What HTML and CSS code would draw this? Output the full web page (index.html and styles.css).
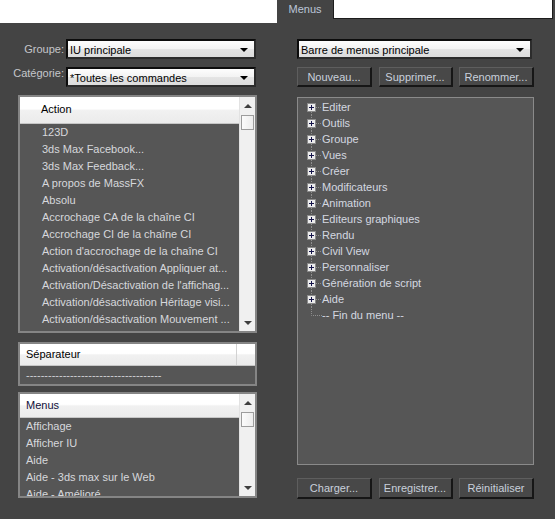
FILE: index.html
```html
<!DOCTYPE html>
<html lang="fr">
<head>
<meta charset="utf-8">
<title>Menus</title>
<link rel="stylesheet" href="styles.css">
</head>
<body>
<div class="topbar">
  <div class="top-left"></div>
  <div class="tab">Menus</div>
  <div class="top-right"></div>
</div>
<div class="main">
  <div class="col-left">
    <div class="field">
      <div class="lbl">Groupe:</div>
      <div class="select"><span>IU principale</span><span class="arrow"></span></div>
    </div>
    <div class="field">
      <div class="lbl lbl-up">Catégorie:</div>
      <div class="select"><span>*Toutes les commandes</span><span class="arrow"></span></div>
    </div>

    <div class="listbox action">
      <div class="lcontent">
        <div class="lhead ahead">Action</div>
        <div class="litem">123D</div>
        <div class="litem">3ds Max Facebook...</div>
        <div class="litem">3ds Max Feedback...</div>
        <div class="litem">A propos de MassFX</div>
        <div class="litem">Absolu</div>
        <div class="litem">Accrochage CA de la chaîne CI</div>
        <div class="litem">Accrochage CI de la chaîne CI</div>
        <div class="litem">Action d'accrochage de la chaîne CI</div>
        <div class="litem">Activation/désactivation Appliquer at...</div>
        <div class="litem">Activation/Désactivation de l'affichag...</div>
        <div class="litem">Activation/désactivation Héritage visi...</div>
        <div class="litem">Activation/désactivation Mouvement ...</div>
        <div class="litem">Activation/désactivation Positionnem...</div>
      </div>
      <div class="scroll">
        <div class="sb-btn"><span class="up"></span></div>
        <div class="thumb"></div>
        <div class="sb-fill"></div>
        <div class="sb-btn"><span class="down"></span></div>
      </div>
    </div>

    <div class="listbox sep">
      <div class="lcontent">
        <div class="lhead sephead"><div class="sepcell">Séparateur</div><div class="sepcell2"></div></div>
        <div class="sepline">-------------------------------------</div>
      </div>
    </div>

    <div class="listbox menus">
      <div class="lcontent">
        <div class="lhead mhead">Menus</div>
        <div class="litem mitem">Affichage</div>
        <div class="litem mitem">Afficher IU</div>
        <div class="litem mitem">Aide</div>
        <div class="litem mitem">Aide - 3ds max sur le Web</div>
        <div class="litem mitem">Aide - Amélioré</div>
      </div>
      <div class="scroll">
        <div class="sb-btn"><span class="up"></span></div>
        <div class="thumb"></div>
        <div class="sb-fill"></div>
        <div class="sb-btn"><span class="down"></span></div>
      </div>
    </div>
  </div>

  <div class="col-right">
    <div class="select wide"><span>Barre de menus principale</span><span class="arrow"></span></div>
    <div class="btnrow">
      <button class="btn">Nouveau...</button>
      <button class="btn mid">Supprimer...</button>
      <button class="btn">Renommer...</button>
    </div>
    <div class="tree">
      <div class="node"><svg viewBox="0 0 19 16"><path class="dot" d="M8.5 13V16M13 8.5H19"/><rect class="pbox" x="4.5" y="4.5" width="8" height="8"/><path class="plus" d="M6 8.5H11M8.5 6V11"/></svg><span>Editer</span></div>
      <div class="node"><svg viewBox="0 0 19 16"><path class="dot" d="M8.5 0V4M8.5 13V16M13 8.5H19"/><rect class="pbox" x="4.5" y="4.5" width="8" height="8"/><path class="plus" d="M6 8.5H11M8.5 6V11"/></svg><span>Outils</span></div>
      <div class="node"><svg viewBox="0 0 19 16"><path class="dot" d="M8.5 0V4M8.5 13V16M13 8.5H19"/><rect class="pbox" x="4.5" y="4.5" width="8" height="8"/><path class="plus" d="M6 8.5H11M8.5 6V11"/></svg><span>Groupe</span></div>
      <div class="node"><svg viewBox="0 0 19 16"><path class="dot" d="M8.5 0V4M8.5 13V16M13 8.5H19"/><rect class="pbox" x="4.5" y="4.5" width="8" height="8"/><path class="plus" d="M6 8.5H11M8.5 6V11"/></svg><span>Vues</span></div>
      <div class="node"><svg viewBox="0 0 19 16"><path class="dot" d="M8.5 0V4M8.5 13V16M13 8.5H19"/><rect class="pbox" x="4.5" y="4.5" width="8" height="8"/><path class="plus" d="M6 8.5H11M8.5 6V11"/></svg><span>Créer</span></div>
      <div class="node"><svg viewBox="0 0 19 16"><path class="dot" d="M8.5 0V4M8.5 13V16M13 8.5H19"/><rect class="pbox" x="4.5" y="4.5" width="8" height="8"/><path class="plus" d="M6 8.5H11M8.5 6V11"/></svg><span>Modificateurs</span></div>
      <div class="node"><svg viewBox="0 0 19 16"><path class="dot" d="M8.5 0V4M8.5 13V16M13 8.5H19"/><rect class="pbox" x="4.5" y="4.5" width="8" height="8"/><path class="plus" d="M6 8.5H11M8.5 6V11"/></svg><span>Animation</span></div>
      <div class="node"><svg viewBox="0 0 19 16"><path class="dot" d="M8.5 0V4M8.5 13V16M13 8.5H19"/><rect class="pbox" x="4.5" y="4.5" width="8" height="8"/><path class="plus" d="M6 8.5H11M8.5 6V11"/></svg><span>Editeurs graphiques</span></div>
      <div class="node"><svg viewBox="0 0 19 16"><path class="dot" d="M8.5 0V4M8.5 13V16M13 8.5H19"/><rect class="pbox" x="4.5" y="4.5" width="8" height="8"/><path class="plus" d="M6 8.5H11M8.5 6V11"/></svg><span>Rendu</span></div>
      <div class="node"><svg viewBox="0 0 19 16"><path class="dot" d="M8.5 0V4M8.5 13V16M13 8.5H19"/><rect class="pbox" x="4.5" y="4.5" width="8" height="8"/><path class="plus" d="M6 8.5H11M8.5 6V11"/></svg><span>Civil View</span></div>
      <div class="node"><svg viewBox="0 0 19 16"><path class="dot" d="M8.5 0V4M8.5 13V16M13 8.5H19"/><rect class="pbox" x="4.5" y="4.5" width="8" height="8"/><path class="plus" d="M6 8.5H11M8.5 6V11"/></svg><span>Personnaliser</span></div>
      <div class="node"><svg viewBox="0 0 19 16"><path class="dot" d="M8.5 0V4M8.5 13V16M13 8.5H19"/><rect class="pbox" x="4.5" y="4.5" width="8" height="8"/><path class="plus" d="M6 8.5H11M8.5 6V11"/></svg><span>Génération de script</span></div>
      <div class="node"><svg viewBox="0 0 19 16"><path class="dot" d="M8.5 0V4M8.5 13V16M13 8.5H19"/><rect class="pbox" x="4.5" y="4.5" width="8" height="8"/><path class="plus" d="M6 8.5H11M8.5 6V11"/></svg><span>Aide</span></div>
      <div class="node"><svg viewBox="0 0 19 16"><path class="dot" d="M8.5 0V8.5H19"/></svg><span>-- Fin du menu --</span></div>
    </div>
    <div class="btnrow bottom">
      <button class="btn">Charger...</button>
      <button class="btn mid">Enregistrer...</button>
      <button class="btn">Réinitialiser</button>
    </div>
  </div>
</div>
</body>
</html>
```

FILE: styles.css
```css
html, body {
  margin: 0;
  padding: 0;
}
body {
  background: #444444;
  font-family: "Liberation Sans", Arial, sans-serif;
  font-size: 11px;
  color: #d4d8de;
  width: 555px;
  height: 519px;
  overflow: hidden;
}

/* top tab strip */
.topbar {
  display: flex;
  height: 23px;
}
.top-left {
  width: 277px;
  background: #ffffff;
}
.tab {
  width: 56px;
  box-sizing: border-box;
  padding-top: 2px;
  line-height: 14px;
  text-align: center;
  color: #bcc6d8;
}
.top-right {
  width: 220px;
  height: 19px;
  box-sizing: border-box;
  background: #ffffff;
  border: 1px solid #1c1c1c;
  border-top: 0;
}

/* columns */
.main {
  display: flex;
}
.col-left {
  width: 257px;
  padding-top: 16px;
  display: flex;
  flex-direction: column;
}
.col-right {
  width: 237px;
  margin-left: 40px;
  padding-top: 16px;
  display: flex;
  flex-direction: column;
}

/* fields */
.field {
  display: flex;
  height: 20px;
}
.field + .field {
  margin-top: 8px;
}
.lbl {
  width: 64px;
  text-align: right;
  white-space: nowrap;
  line-height: 20px;
  color: #c4c6ca;
}
.lbl-up {
  line-height: 12px;
}
.select {
  width: 190px;
  margin-left: 2px;
  height: 20px;
  box-sizing: border-box;
  border-style: solid;
  border-width: 2px;
  border-color: #0c0c0c #2c2c2c #2c2c2c #0c0c0c;
  background: linear-gradient(#fdfdfd, #f3f3f3 48%, #e4e4e4 52%, #dcdcdc);
  color: #000000;
  padding: 1px 6px 0 2px;
  display: flex;
  align-items: center;
  justify-content: space-between;
  white-space: nowrap;
}
.select.wide {
  width: 235px;
  margin-left: 0;
}
.arrow {
  width: 0;
  height: 0;
  border-left: 4px solid transparent;
  border-right: 4px solid transparent;
  border-top: 4px solid #000000;
}

/* list boxes */
.listbox {
  margin-left: 18px;
  width: 239px;
  box-sizing: border-box;
  border: 2px solid #858585;
  background: #565656;
  display: flex;
  overflow: hidden;
}
.action {
  margin-top: 8px;
  height: 238px;
}
.sep {
  margin-top: 9px;
  height: 44px;
}
.menus {
  margin-top: 6px;
  height: 106px;
}
.lcontent {
  flex: 1;
  min-width: 0;
  overflow: hidden;
  display: flex;
  flex-direction: column;
}
.lhead {
  flex: none;
  height: 25px;
  line-height: 25px;
  border-bottom: 1px solid #c6c6c6;
  background: linear-gradient(#ffffff, #ffffff 45%, #f1f1f1 52%, #ebebeb);
  color: #000000;
  padding-left: 21px;
}
.ahead {
  height: 26px;
  line-height: 25px;
}
.litem {
  flex: none;
  height: 17px;
  line-height: 17px;
  padding-left: 22px;
  white-space: nowrap;
  color: #d6d8dc;
}
.mhead {
  height: 23px;
  line-height: 23px;
  padding-left: 6px;
  color: #10103a;
}
.mitem {
  padding-left: 6px;
}
.sephead {
  height: 21px;
  line-height: 21px;
  padding-left: 0;
  display: flex;
}
.sepcell {
  width: 210px;
  padding-left: 6px;
  border-right: 1px solid #d2d2d2;
}
.sepcell2 {
  flex: 1;
}
.sepline {
  line-height: 18px;
  padding-left: 6px;
  white-space: nowrap;
  color: #d0d2d6;
}

/* scrollbar */
.scroll {
  flex: none;
  width: 16px;
  box-sizing: border-box;
  border-left: 1px solid #e2e2e2;
  background: #f0f0f0;
  display: flex;
  flex-direction: column;
  align-items: center;
}
.sb-btn {
  flex: none;
  width: 15px;
  height: 17px;
  display: flex;
  align-items: center;
  justify-content: center;
}
.up {
  width: 0;
  height: 0;
  border-left: 4px solid transparent;
  border-right: 4px solid transparent;
  border-bottom: 4px solid #3e3e3e;
}
.down {
  width: 0;
  height: 0;
  border-left: 4px solid transparent;
  border-right: 4px solid transparent;
  border-top: 4px solid #3e3e3e;
}
.thumb {
  flex: none;
  margin-top: 1px;
  width: 13px;
  height: 15px;
  box-sizing: border-box;
  border: 1px solid #9c9c9c;
  background: linear-gradient(to right, #fbfbfb, #ececec);
}
.sb-fill {
  flex: 1;
}

/* buttons */
.btnrow {
  display: flex;
  justify-content: space-between;
  margin-top: 8px;
  height: 20px;
}
.btnrow.bottom {
  margin-top: 13px;
  height: 21px;
}
.btn {
  width: 75px;
  height: 100%;
  box-sizing: border-box;
  padding: 0;
  margin: 0;
  font: inherit;
  color: #c8d0dc;
  background: #484848;
  border-style: solid;
  border-width: 1px 2px 2px 1px;
  border-color: #5e5e5e #161616 #161616 #5e5e5e;
  text-align: center;
  white-space: nowrap;
}
.btn.mid {
  width: 74px;
}

/* tree */
.tree {
  margin-top: 10px;
  height: 368px;
  box-sizing: border-box;
  border: 1px solid #8a8a8a;
  background: #565656;
  padding: 1px 0 0 5px;
}
.node {
  display: flex;
  align-items: center;
  height: 16px;
}
.node svg {
  flex: none;
  width: 19px;
  height: 16px;
  display: block;
}
.node span {
  line-height: 16px;
  white-space: nowrap;
  color: #d4d8e0;
}
.dot {
  fill: none;
  stroke: #8e8e8e;
  stroke-width: 1;
  stroke-dasharray: 1 1;
}
.pbox {
  fill: #ececec;
  stroke: #8a8a8a;
  stroke-width: 1;
}
.plus {
  fill: none;
  stroke: #14144a;
  stroke-width: 1;
}
```
